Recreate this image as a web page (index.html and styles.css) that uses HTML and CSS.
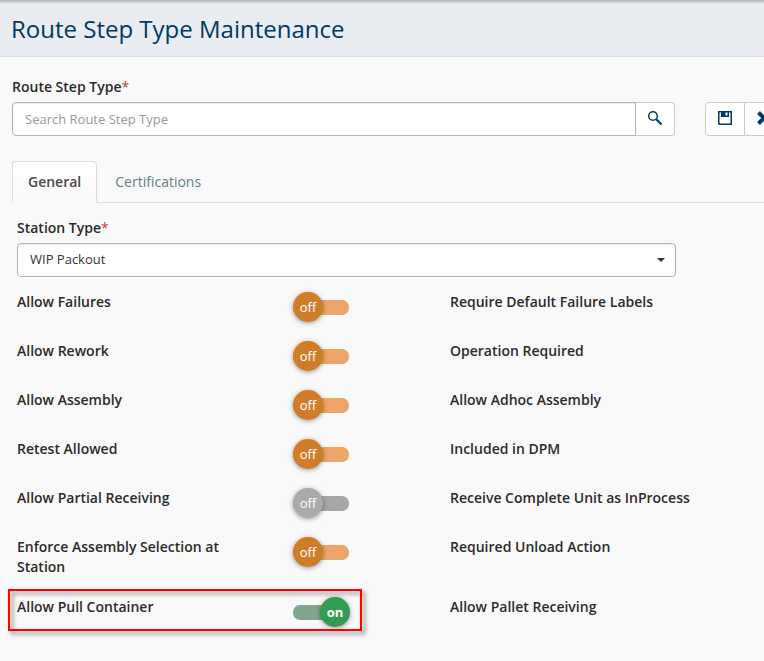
FILE: index.html
```html
<!DOCTYPE html>
<html lang="en">
<head>
<meta charset="utf-8">
<title>Route Step Type Maintenance</title>
<link rel="stylesheet" href="styles.css">
</head>
<body>
<header class="page-header"><h1>Route Step Type Maintenance</h1></header>
<main>
  <section class="search-section">
    <label class="field-label" for="route">Route Step Type<span class="required">*</span></label>
    <div class="search-row">
      <div class="search-group">
        <input class="search-input" id="route" type="text" placeholder="Search Route Step Type">
        <button class="icon-button search-button" type="button" aria-label="Search">
          <svg width="16" height="16" viewBox="0 0 16 16"><circle cx="6" cy="6" r="4.300" fill="none" stroke="currentColor" stroke-width="1.500"/><path d="M9.200 9.200L14.500 14.500" stroke="currentColor" stroke-width="2"/></svg>
        </button>
      </div>
      <div class="toolbar">
        <button class="icon-button" type="button" aria-label="Save">
          <svg width="16" height="16" viewBox="0 0 16 16"><path fill="currentColor" fill-rule="evenodd" d="M1 1H15V15H2L1 14ZM2.500 2.500V13L3 13.500H13.500V2.500H12V7H4V2.500ZM8.500 2.500V5.500H10.500V2.500Z"/></svg>
        </button>
        <button class="icon-button" type="button" aria-label="Clear">
          <svg width="16" height="16" viewBox="0 0 16 16"><path d="M2.500 2.500L13.500 13.500M13.500 2.500L2.500 13.500" stroke="currentColor" stroke-width="4"/></svg>
        </button>
      </div>
    </div>
  </section>
  <nav class="tabs">
    <a class="tab active" href="#general">General</a>
    <a class="tab" href="#certifications">Certifications</a>
  </nav>
  <section class="panel" id="general">
    <label class="field-label" for="station">Station Type<span class="required">*</span></label>
    <div class="select-wrap">
      <select id="station"><option>WIP Packout</option></select>
    </div>
    <div class="settings">
      <div class="setting"><label for="s1">Allow Failures</label><span class="toggle"><input id="s1" type="checkbox"><span class="knob">off</span></span><span class="second">Require Default Failure Labels</span></div>
      <div class="setting"><label for="s2">Allow Rework</label><span class="toggle"><input id="s2" type="checkbox"><span class="knob">off</span></span><span class="second">Operation Required</span></div>
      <div class="setting"><label for="s3">Allow Assembly</label><span class="toggle"><input id="s3" type="checkbox"><span class="knob">off</span></span><span class="second">Allow Adhoc Assembly</span></div>
      <div class="setting"><label for="s4">Retest Allowed</label><span class="toggle"><input id="s4" type="checkbox"><span class="knob">off</span></span><span class="second">Included in DPM</span></div>
      <div class="setting"><label for="s5">Allow Partial Receiving</label><span class="toggle"><input id="s5" type="checkbox" disabled><span class="knob">off</span></span><span class="second">Receive Complete Unit as InProcess</span></div>
      <div class="setting"><label for="s6">Enforce Assembly Selection at Station</label><span class="toggle"><input id="s6" type="checkbox"><span class="knob">off</span></span><span class="second">Required Unload Action</span></div>
      <div class="setting"><label for="s7">Allow Pull Container</label><span class="toggle"><input id="s7" type="checkbox" checked><span class="knob">on</span></span><span class="second">Allow Pallet Receiving</span><span class="callout"></span></div>
    </div>
  </section>
</main>
</body>
</html>
```
FILE: styles.css
```css
* { box-sizing: border-box; }
body {
  margin: 0;
  overflow-x: hidden;
  background: #f9f9f9;
  color: #2b2b2b;
  font: 400 14px/20px "Open Sans", "Noto Sans", sans-serif;
}
.page-header {
  height: 57px;
  padding: 11px;
  background: linear-gradient(#b0b3b8, #e9ecf1 4px);
  border-bottom: 1px solid #dcdde8;
}
h1 {
  margin: 0;
  color: #003a63;
  font-size: 24px;
  font-weight: 400;
  line-height: 36px;
}
.search-section { padding: 20px 0 0 12px; }
.field-label { display: block; font-weight: 600; }
.required { color: #cc3a3a; font-weight: 400; }
.search-row { display: flex; gap: 30px; margin-top: 5px; }
.search-group { display: flex; flex: 1; min-width: 0; }
.search-input {
  flex: 1;
  min-width: 0;
  height: 34px;
  padding: 0 12px;
  border: 1px solid #b3b3b3;
  border-radius: 4px 0 0 4px;
  background: #fff;
  box-shadow: inset 0 1px 1px #00000013;
  font: inherit;
  font-size: 13px;
}
.search-input::placeholder { color: #999; }
.icon-button {
  display: flex;
  flex: 0 0 40px;
  align-items: center;
  justify-content: center;
  height: 34px;
  padding: 0 0 2px;
  border: 1px solid #ccc;
  background: #fff;
  color: #003a6b;
}
.search-button { flex-basis: 39px; border-left: 0; border-radius: 0 4px 4px 0; }
.toolbar { display: flex; width: 59px; }
.toolbar .icon-button:first-child { border-radius: 4px 0 0 4px; }
.toolbar .icon-button:last-child { margin-left: -1px; border-radius: 0 4px 4px 0; }
.tabs {
  display: flex;
  margin: 25px 0 0 12px;
  border-bottom: 1px solid #ddd;
}
.tab {
  padding: 10px 15px;
  margin-bottom: -1px;
  border: 1px solid transparent;
  color: #668087;
  text-decoration: none;
}
.tab.active {
  border-color: #ddd;
  border-bottom-color: #f9f9f9;
  border-radius: 4px 4px 0 0;
  background: linear-gradient(#fff, #f9f9f9);
  color: #4a4a4a;
  font-weight: 600;
  margin-right: 2px;
}
.panel { padding: 15px 0 20px 17px; }
.select-wrap { position: relative; margin: 5px 88px 0 0; }
.select-wrap::after {
  content: "";
  position: absolute;
  top: 15px;
  right: 11px;
  border: 4px solid transparent;
  border-top-color: #333;
  border-bottom: 0;
  pointer-events: none;
}
select {
  display: block;
  appearance: none;
  width: 100%;
  height: 34px;
  padding: 0 12px 2px;
  border: 1px solid #b3b3b3;
  border-radius: 4px;
  background: #fff;
  box-shadow: inset 0 1px 1px #00000013;
  color: #333;
  font: inherit;
  font-size: 13px;
}
.settings { display: grid; gap: 19px; margin-top: 15px; font-weight: 600; }
.setting {
  position: relative;
  display: grid;
  grid-template-columns: 276fr 157fr 314fr;
  align-items: start;
}
.setting label { padding: 0 40px 1px 0; }
.toggle {
  display: flex;
  align-items: center;
  position: relative;
  width: 57px;
  height: 30px;
}
.toggle input {
  appearance: none;
  width: 56px;
  height: 15px;
  margin: 0;
  border-radius: 7px;
  background: #eea568;
}
.knob {
  position: absolute;
  left: 0;
  width: 30px;
  height: 30px;
  border-radius: 50%;
  background: #d17d28;
  box-shadow: 0 1px 5px #00000066;
  color: #fff;
  font-size: 13px;
  font-weight: 400;
  line-height: 30px;
  text-align: center;
  pointer-events: none;
}
.toggle input:disabled { background: #a8a8a8; }
.toggle input:disabled + .knob { background: #ababab; }
.toggle input:checked { background: #80a78d; }
.toggle input:checked + .knob {
  left: auto;
  right: 0;
  background: #329d52;
  font-weight: 700;
}
.callout {
  position: absolute;
  grid-column: 1 / 3;
  top: -8px;
  left: -9px;
  right: 88px;
  height: 42px;
  border: 2px solid #f00;
  filter: drop-shadow(3px 3px 2px #00000080);
  pointer-events: none;
}
```
